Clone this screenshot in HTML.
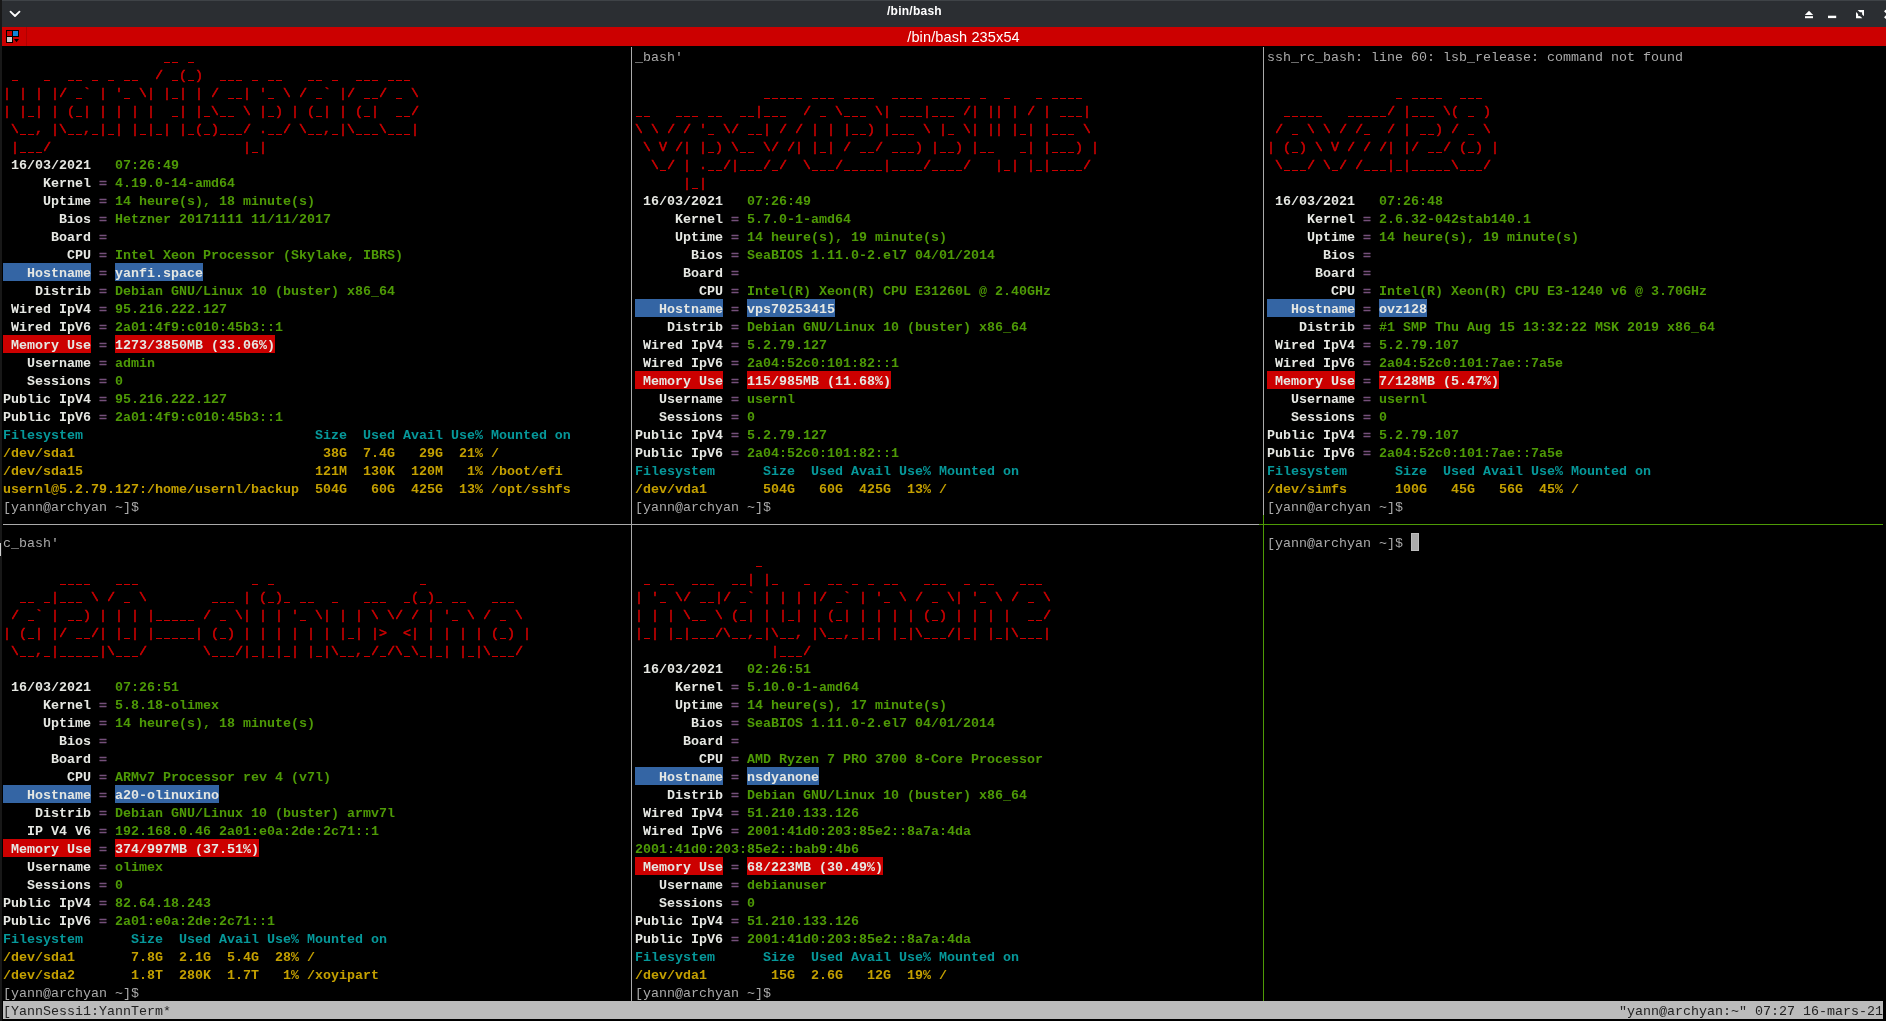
<!DOCTYPE html>
<html><head><meta charset="utf-8"><title>/bin/bash</title>
<style>
html,body{margin:0;padding:0;background:#000;}
body{width:1886px;height:1021px;position:relative;overflow:hidden;font-family:"Liberation Mono",monospace;}
#tb{position:absolute;left:0;top:0;width:1886px;height:27px;background:#2b2e32;}
#tb .hl{position:absolute;left:0;top:0;width:1886px;height:1px;background:#3f4347;}
#tb .t{position:absolute;left:0;top:3px;width:1829px;text-align:center;color:#fff;font:bold 12px/16px "Liberation Sans",sans-serif;letter-spacing:0.25px;will-change:transform;}
#rb{position:absolute;left:2px;top:27px;width:1884px;height:19px;background:#cc0000;}
#rb .t{position:absolute;left:0;top:0;width:1923px;text-align:center;color:#fff;font:14.5px/21px "Liberation Sans",sans-serif;letter-spacing:0.13px;will-change:transform;}
#rb .sep{position:absolute;left:24px;top:0;width:1px;height:19px;background:#b00000;}
#edge{position:absolute;left:0;top:0;width:2px;height:1021px;background:#181818;z-index:5;}
#term{position:absolute;left:0;top:0;width:1886px;height:1021px;will-change:transform;}
.s{position:absolute;height:18px;line-height:21px;font-size:13.333px;white-space:pre;}
.b{position:absolute;height:18px;}
.r{color:#cc0000;-webkit-text-stroke:0.55px #cc0000;}
.w{color:#e6e8e3;font-weight:bold;}
.g{color:#4e9a06;font-weight:bold;}
.m{color:#75507b;-webkit-text-stroke:0.4px #75507b;}
.c{color:#06989a;font-weight:bold;}
.y{color:#c4a000;font-weight:bold;}
.n{color:#aaaaaa;}
.st{color:#222;}
.ln{position:absolute;}
.gap{position:absolute;height:4px;box-shadow:-1px 0 0 #000,1px 0 0 #000;background:repeating-linear-gradient(90deg,#000 0,#000 0.6px,transparent 0.6px,transparent 7.3px,#000 7.3px,#000 8px);}
</style></head><body>
<div id="edge"></div><div style="position:absolute;left:0;top:543px;width:1px;height:13px;background:#d0d0d0;z-index:6"></div>
<div id="tb"><div class="hl"></div><div class="t">/bin/bash</div>
<svg style="position:absolute;left:0;top:0" width="1886" height="27" viewBox="0 0 1886 27">
<polyline points="10.5,11.7 15,16 19.5,11.7" fill="none" stroke="#fff" stroke-width="1.8" stroke-linecap="round" stroke-linejoin="round"/>
<polygon points="1809,10.8 1813.2,15 1804.8,15" fill="#fff"/>
<rect x="1805" y="16.2" width="8" height="2" fill="#fff"/>
<rect x="1828" y="15.7" width="8.2" height="2.4" fill="#fff"/>
<polygon points="1857.6,10 1864,10 1864,16.2" fill="#fff"/>
<polygon points="1856,12 1856,18.2 1862.3,18.2" fill="#fff"/>
<rect x="1858.2" y="12.3" width="3.9" height="3.8" fill="#2b2e32"/>
<path d="M1884.8,10.5 L1892.8,18 M1884.8,18 L1892.8,10.5" stroke="#fff" stroke-width="2.2" fill="none"/>
</svg>
</div>
<div id="rb"><div class="sep"></div><div class="t">/bin/bash 235x54</div>
<svg style="position:absolute;left:-2px;top:-27px" width="40" height="46" viewBox="0 0 40 46">
<rect x="6" y="30" width="13" height="7" fill="#000"/>
<rect x="6" y="30" width="7" height="13" fill="#000"/>
<rect x="7" y="31" width="5" height="5" fill="#cc0000"/>
<rect x="13" y="31" width="5" height="5" fill="#0f84d9"/>
<rect x="7" y="37" width="5" height="5" fill="#c8c8c8"/>
<polygon points="14,39 19,39 16.5,42.2" fill="#000"/>
</svg>
</div>
<div id="term">
<div class="b" style="left:3px;top:1001px;width:1880px;background:#bbbbbb"></div>
<div class="b" style="left:3px;top:263px;width:88px;background:#3465a4"></div>
<div class="b" style="left:115px;top:263px;width:88px;background:#3465a4"></div>
<div class="b" style="left:3px;top:335px;width:88px;background:#cc0000"></div>
<div class="b" style="left:115px;top:335px;width:160px;background:#cc0000"></div>
<div class="b" style="left:635px;top:299px;width:88px;background:#3465a4"></div>
<div class="b" style="left:747px;top:299px;width:88px;background:#3465a4"></div>
<div class="b" style="left:635px;top:371px;width:88px;background:#cc0000"></div>
<div class="b" style="left:747px;top:371px;width:144px;background:#cc0000"></div>
<div class="b" style="left:1267px;top:299px;width:88px;background:#3465a4"></div>
<div class="b" style="left:1379px;top:299px;width:48px;background:#3465a4"></div>
<div class="b" style="left:1267px;top:371px;width:88px;background:#cc0000"></div>
<div class="b" style="left:1379px;top:371px;width:120px;background:#cc0000"></div>
<div class="b" style="left:3px;top:785px;width:88px;background:#3465a4"></div>
<div class="b" style="left:115px;top:785px;width:104px;background:#3465a4"></div>
<div class="b" style="left:3px;top:839px;width:88px;background:#cc0000"></div>
<div class="b" style="left:115px;top:839px;width:144px;background:#cc0000"></div>
<div class="b" style="left:635px;top:767px;width:88px;background:#3465a4"></div>
<div class="b" style="left:747px;top:767px;width:72px;background:#3465a4"></div>
<div class="b" style="left:635px;top:857px;width:88px;background:#cc0000"></div>
<div class="b" style="left:747px;top:857px;width:136px;background:#cc0000"></div>
<span class="s r" style="left:163px;top:47px">__ _</span>
<span class="s r" style="left:11px;top:65px">_   _  __ _ _ __  / _(_)  ___ _ __   __ _  ___ ___</span>
<span class="s r" style="left:3px;top:83px">| | | |/ _` | '_ \| |_| | / __| '_ \ / _` |/ __/ _ \</span>
<span class="s r" style="left:3px;top:101px">| |_| | (_| | | | |  _| |_\__ \ |_) | (_| | (_|  __/</span>
<span class="s r" style="left:11px;top:119px">\__, |\__,_|_| |_|_| |_(_)___/ .__/ \__,_|\___\___|</span>
<span class="s r" style="left:11px;top:137px">|___/                        |_|</span>
<span class="s w" style="left:11px;top:155px">16/03/2021</span>
<span class="s g" style="left:115px;top:155px">07:26:49</span>
<span class="s w" style="left:43px;top:173px">Kernel</span>
<span class="s m" style="left:99px;top:173px">=</span>
<span class="s g" style="left:115px;top:173px">4.19.0-14-amd64</span>
<span class="s w" style="left:43px;top:191px">Uptime</span>
<span class="s m" style="left:99px;top:191px">=</span>
<span class="s g" style="left:115px;top:191px">14 heure(s), 18 minute(s)</span>
<span class="s w" style="left:59px;top:209px">Bios</span>
<span class="s m" style="left:99px;top:209px">=</span>
<span class="s g" style="left:115px;top:209px">Hetzner 20171111 11/11/2017</span>
<span class="s w" style="left:51px;top:227px">Board</span>
<span class="s m" style="left:99px;top:227px">=</span>
<span class="s w" style="left:67px;top:245px">CPU</span>
<span class="s m" style="left:99px;top:245px">=</span>
<span class="s g" style="left:115px;top:245px">Intel Xeon Processor (Skylake, IBRS)</span>
<span class="s w" style="left:3px;top:263px">   Hostname</span>
<span class="s m" style="left:99px;top:263px">=</span>
<span class="s w" style="left:115px;top:263px">yanfi.space</span>
<span class="s w" style="left:35px;top:281px">Distrib</span>
<span class="s m" style="left:99px;top:281px">=</span>
<span class="s g" style="left:115px;top:281px">Debian GNU/Linux 10 (buster) x86_64</span>
<span class="s w" style="left:11px;top:299px">Wired IpV4</span>
<span class="s m" style="left:99px;top:299px">=</span>
<span class="s g" style="left:115px;top:299px">95.216.222.127</span>
<span class="s w" style="left:11px;top:317px">Wired IpV6</span>
<span class="s m" style="left:99px;top:317px">=</span>
<span class="s g" style="left:115px;top:317px">2a01:4f9:c010:45b3::1</span>
<span class="s w" style="left:3px;top:335px"> Memory Use</span>
<span class="s m" style="left:99px;top:335px">=</span>
<span class="s w" style="left:115px;top:335px">1273/3850MB (33.06%)</span>
<span class="s w" style="left:27px;top:353px">Username</span>
<span class="s m" style="left:99px;top:353px">=</span>
<span class="s g" style="left:115px;top:353px">admin</span>
<span class="s w" style="left:27px;top:371px">Sessions</span>
<span class="s m" style="left:99px;top:371px">=</span>
<span class="s g" style="left:115px;top:371px">0</span>
<span class="s w" style="left:3px;top:389px">Public IpV4</span>
<span class="s m" style="left:99px;top:389px">=</span>
<span class="s g" style="left:115px;top:389px">95.216.222.127</span>
<span class="s w" style="left:3px;top:407px">Public IpV6</span>
<span class="s m" style="left:99px;top:407px">=</span>
<span class="s g" style="left:115px;top:407px">2a01:4f9:c010:45b3::1</span>
<span class="s c" style="left:3px;top:425px">Filesystem                             Size  Used Avail Use% Mounted on</span>
<span class="s y" style="left:3px;top:443px">/dev/sda1                               38G  7.4G   29G  21% /</span>
<span class="s y" style="left:3px;top:461px">/dev/sda15                             121M  130K  120M   1% /boot/efi</span>
<span class="s y" style="left:3px;top:479px">usernl@5.2.79.127:/home/usernl/backup  504G   60G  425G  13% /opt/sshfs</span>
<span class="s n" style="left:3px;top:497px">[yann@archyan ~]$</span>
<span class="s n" style="left:635px;top:47px">_bash'</span>
<span class="s r" style="left:763px;top:83px">_____ ___ ____  ____ _____ _  _   _ ____</span>
<span class="s r" style="left:635px;top:101px">__   ___ __  __|___  / _ \___ \| ___|___ /| || | / | ___|</span>
<span class="s r" style="left:635px;top:119px">\ \ / / '_ \/ __| / / | | |__) |___ \ |_ \| || |_| |___ \</span>
<span class="s r" style="left:643px;top:137px">\ V /| |_) \__ \/ /| |_| / __/ ___) |__) |__   _| |___) |</span>
<span class="s r" style="left:651px;top:155px">\_/ | .__/|___/_/  \___/_____|____/____/   |_| |_|____/</span>
<span class="s r" style="left:683px;top:173px">|_|</span>
<span class="s w" style="left:643px;top:191px">16/03/2021</span>
<span class="s g" style="left:747px;top:191px">07:26:49</span>
<span class="s w" style="left:675px;top:209px">Kernel</span>
<span class="s m" style="left:731px;top:209px">=</span>
<span class="s g" style="left:747px;top:209px">5.7.0-1-amd64</span>
<span class="s w" style="left:675px;top:227px">Uptime</span>
<span class="s m" style="left:731px;top:227px">=</span>
<span class="s g" style="left:747px;top:227px">14 heure(s), 19 minute(s)</span>
<span class="s w" style="left:691px;top:245px">Bios</span>
<span class="s m" style="left:731px;top:245px">=</span>
<span class="s g" style="left:747px;top:245px">SeaBIOS 1.11.0-2.el7 04/01/2014</span>
<span class="s w" style="left:683px;top:263px">Board</span>
<span class="s m" style="left:731px;top:263px">=</span>
<span class="s w" style="left:699px;top:281px">CPU</span>
<span class="s m" style="left:731px;top:281px">=</span>
<span class="s g" style="left:747px;top:281px">Intel(R) Xeon(R) CPU E31260L @ 2.40GHz</span>
<span class="s w" style="left:635px;top:299px">   Hostname</span>
<span class="s m" style="left:731px;top:299px">=</span>
<span class="s w" style="left:747px;top:299px">vps70253415</span>
<span class="s w" style="left:667px;top:317px">Distrib</span>
<span class="s m" style="left:731px;top:317px">=</span>
<span class="s g" style="left:747px;top:317px">Debian GNU/Linux 10 (buster) x86_64</span>
<span class="s w" style="left:643px;top:335px">Wired IpV4</span>
<span class="s m" style="left:731px;top:335px">=</span>
<span class="s g" style="left:747px;top:335px">5.2.79.127</span>
<span class="s w" style="left:643px;top:353px">Wired IpV6</span>
<span class="s m" style="left:731px;top:353px">=</span>
<span class="s g" style="left:747px;top:353px">2a04:52c0:101:82::1</span>
<span class="s w" style="left:635px;top:371px"> Memory Use</span>
<span class="s m" style="left:731px;top:371px">=</span>
<span class="s w" style="left:747px;top:371px">115/985MB (11.68%)</span>
<span class="s w" style="left:659px;top:389px">Username</span>
<span class="s m" style="left:731px;top:389px">=</span>
<span class="s g" style="left:747px;top:389px">usernl</span>
<span class="s w" style="left:659px;top:407px">Sessions</span>
<span class="s m" style="left:731px;top:407px">=</span>
<span class="s g" style="left:747px;top:407px">0</span>
<span class="s w" style="left:635px;top:425px">Public IpV4</span>
<span class="s m" style="left:731px;top:425px">=</span>
<span class="s g" style="left:747px;top:425px">5.2.79.127</span>
<span class="s w" style="left:635px;top:443px">Public IpV6</span>
<span class="s m" style="left:731px;top:443px">=</span>
<span class="s g" style="left:747px;top:443px">2a04:52c0:101:82::1</span>
<span class="s c" style="left:635px;top:461px">Filesystem      Size  Used Avail Use% Mounted on</span>
<span class="s y" style="left:635px;top:479px">/dev/vda1       504G   60G  425G  13% /</span>
<span class="s n" style="left:635px;top:497px">[yann@archyan ~]$</span>
<span class="s n" style="left:1267px;top:47px">ssh_rc_bash: line 60: lsb_release: command not found</span>
<span class="s r" style="left:1395px;top:83px">_ ____  ___</span>
<span class="s r" style="left:1283px;top:101px">_____   _____/ |___ \( _ )</span>
<span class="s r" style="left:1275px;top:119px">/ _ \ \ / /_  / | __) / _ \</span>
<span class="s r" style="left:1267px;top:137px">| (_) \ V / / /| |/ __/ (_) |</span>
<span class="s r" style="left:1275px;top:155px">\___/ \_/ /___|_|_____\___/</span>
<span class="s w" style="left:1275px;top:191px">16/03/2021</span>
<span class="s g" style="left:1379px;top:191px">07:26:48</span>
<span class="s w" style="left:1307px;top:209px">Kernel</span>
<span class="s m" style="left:1363px;top:209px">=</span>
<span class="s g" style="left:1379px;top:209px">2.6.32-042stab140.1</span>
<span class="s w" style="left:1307px;top:227px">Uptime</span>
<span class="s m" style="left:1363px;top:227px">=</span>
<span class="s g" style="left:1379px;top:227px">14 heure(s), 19 minute(s)</span>
<span class="s w" style="left:1323px;top:245px">Bios</span>
<span class="s m" style="left:1363px;top:245px">=</span>
<span class="s w" style="left:1315px;top:263px">Board</span>
<span class="s m" style="left:1363px;top:263px">=</span>
<span class="s w" style="left:1331px;top:281px">CPU</span>
<span class="s m" style="left:1363px;top:281px">=</span>
<span class="s g" style="left:1379px;top:281px">Intel(R) Xeon(R) CPU E3-1240 v6 @ 3.70GHz</span>
<span class="s w" style="left:1267px;top:299px">   Hostname</span>
<span class="s m" style="left:1363px;top:299px">=</span>
<span class="s w" style="left:1379px;top:299px">ovz128</span>
<span class="s w" style="left:1299px;top:317px">Distrib</span>
<span class="s m" style="left:1363px;top:317px">=</span>
<span class="s g" style="left:1379px;top:317px">#1 SMP Thu Aug 15 13:32:22 MSK 2019 x86_64</span>
<span class="s w" style="left:1275px;top:335px">Wired IpV4</span>
<span class="s m" style="left:1363px;top:335px">=</span>
<span class="s g" style="left:1379px;top:335px">5.2.79.107</span>
<span class="s w" style="left:1275px;top:353px">Wired IpV6</span>
<span class="s m" style="left:1363px;top:353px">=</span>
<span class="s g" style="left:1379px;top:353px">2a04:52c0:101:7ae::7a5e</span>
<span class="s w" style="left:1267px;top:371px"> Memory Use</span>
<span class="s m" style="left:1363px;top:371px">=</span>
<span class="s w" style="left:1379px;top:371px">7/128MB (5.47%)</span>
<span class="s w" style="left:1291px;top:389px">Username</span>
<span class="s m" style="left:1363px;top:389px">=</span>
<span class="s g" style="left:1379px;top:389px">usernl</span>
<span class="s w" style="left:1291px;top:407px">Sessions</span>
<span class="s m" style="left:1363px;top:407px">=</span>
<span class="s g" style="left:1379px;top:407px">0</span>
<span class="s w" style="left:1267px;top:425px">Public IpV4</span>
<span class="s m" style="left:1363px;top:425px">=</span>
<span class="s g" style="left:1379px;top:425px">5.2.79.107</span>
<span class="s w" style="left:1267px;top:443px">Public IpV6</span>
<span class="s m" style="left:1363px;top:443px">=</span>
<span class="s g" style="left:1379px;top:443px">2a04:52c0:101:7ae::7a5e</span>
<span class="s c" style="left:1267px;top:461px">Filesystem      Size  Used Avail Use% Mounted on</span>
<span class="s y" style="left:1267px;top:479px">/dev/simfs      100G   45G   56G  45% /</span>
<span class="s n" style="left:1267px;top:497px">[yann@archyan ~]$</span>
<span class="s n" style="left:3px;top:533px">c_bash'</span>
<span class="s r" style="left:59px;top:569px">____   ___              _ _                  _</span>
<span class="s r" style="left:19px;top:587px">__ _|___ \ / _ \        ___ | (_)_ __  _   ___  _(_)_ __   ___</span>
<span class="s r" style="left:11px;top:605px">/ _` | __) | | | |_____ / _ \| | | '_ \| | | \ \/ / | '_ \ / _ \</span>
<span class="s r" style="left:3px;top:623px">| (_| |/ __/| |_| |_____| (_) | | | | | | |_| |&gt;  &lt;| | | | | (_) |</span>
<span class="s r" style="left:11px;top:641px">\__,_|_____|\___/       \___/|_|_|_| |_|\__,_/_/\_\_|_| |_|\___/</span>
<span class="s w" style="left:11px;top:677px">16/03/2021</span>
<span class="s g" style="left:115px;top:677px">07:26:51</span>
<span class="s w" style="left:43px;top:695px">Kernel</span>
<span class="s m" style="left:99px;top:695px">=</span>
<span class="s g" style="left:115px;top:695px">5.8.18-olimex</span>
<span class="s w" style="left:43px;top:713px">Uptime</span>
<span class="s m" style="left:99px;top:713px">=</span>
<span class="s g" style="left:115px;top:713px">14 heure(s), 18 minute(s)</span>
<span class="s w" style="left:59px;top:731px">Bios</span>
<span class="s m" style="left:99px;top:731px">=</span>
<span class="s w" style="left:51px;top:749px">Board</span>
<span class="s m" style="left:99px;top:749px">=</span>
<span class="s w" style="left:67px;top:767px">CPU</span>
<span class="s m" style="left:99px;top:767px">=</span>
<span class="s g" style="left:115px;top:767px">ARMv7 Processor rev 4 (v7l)</span>
<span class="s w" style="left:3px;top:785px">   Hostname</span>
<span class="s m" style="left:99px;top:785px">=</span>
<span class="s w" style="left:115px;top:785px">a20-olinuxino</span>
<span class="s w" style="left:35px;top:803px">Distrib</span>
<span class="s m" style="left:99px;top:803px">=</span>
<span class="s g" style="left:115px;top:803px">Debian GNU/Linux 10 (buster) armv7l</span>
<span class="s w" style="left:27px;top:821px">IP V4 V6</span>
<span class="s m" style="left:99px;top:821px">=</span>
<span class="s g" style="left:115px;top:821px">192.168.0.46 2a01:e0a:2de:2c71::1</span>
<span class="s w" style="left:3px;top:839px"> Memory Use</span>
<span class="s m" style="left:99px;top:839px">=</span>
<span class="s w" style="left:115px;top:839px">374/997MB (37.51%)</span>
<span class="s w" style="left:27px;top:857px">Username</span>
<span class="s m" style="left:99px;top:857px">=</span>
<span class="s g" style="left:115px;top:857px">olimex</span>
<span class="s w" style="left:27px;top:875px">Sessions</span>
<span class="s m" style="left:99px;top:875px">=</span>
<span class="s g" style="left:115px;top:875px">0</span>
<span class="s w" style="left:3px;top:893px">Public IpV4</span>
<span class="s m" style="left:99px;top:893px">=</span>
<span class="s g" style="left:115px;top:893px">82.64.18.243</span>
<span class="s w" style="left:3px;top:911px">Public IpV6</span>
<span class="s m" style="left:99px;top:911px">=</span>
<span class="s g" style="left:115px;top:911px">2a01:e0a:2de:2c71::1</span>
<span class="s c" style="left:3px;top:929px">Filesystem      Size  Used Avail Use% Mounted on</span>
<span class="s y" style="left:3px;top:947px">/dev/sda1       7.8G  2.1G  5.4G  28% /</span>
<span class="s y" style="left:3px;top:965px">/dev/sda2       1.8T  280K  1.7T   1% /xoyipart</span>
<span class="s n" style="left:3px;top:983px">[yann@archyan ~]$</span>
<span class="s r" style="left:755px;top:551px">_</span>
<span class="s r" style="left:643px;top:569px">_ __  ___  __| |_   _  __ _ _ __   ___  _ __   ___</span>
<span class="s r" style="left:635px;top:587px">| '_ \/ __|/ _` | | | |/ _` | '_ \ / _ \| '_ \ / _ \</span>
<span class="s r" style="left:635px;top:605px">| | | \__ \ (_| | |_| | (_| | | | | (_) | | | |  __/</span>
<span class="s r" style="left:635px;top:623px">|_| |_|___/\__,_|\__, |\__,_|_| |_|\___/|_| |_|\___|</span>
<span class="s r" style="left:771px;top:641px">|___/</span>
<span class="s w" style="left:643px;top:659px">16/03/2021</span>
<span class="s g" style="left:747px;top:659px">02:26:51</span>
<span class="s w" style="left:675px;top:677px">Kernel</span>
<span class="s m" style="left:731px;top:677px">=</span>
<span class="s g" style="left:747px;top:677px">5.10.0-1-amd64</span>
<span class="s w" style="left:675px;top:695px">Uptime</span>
<span class="s m" style="left:731px;top:695px">=</span>
<span class="s g" style="left:747px;top:695px">14 heure(s), 17 minute(s)</span>
<span class="s w" style="left:691px;top:713px">Bios</span>
<span class="s m" style="left:731px;top:713px">=</span>
<span class="s g" style="left:747px;top:713px">SeaBIOS 1.11.0-2.el7 04/01/2014</span>
<span class="s w" style="left:683px;top:731px">Board</span>
<span class="s m" style="left:731px;top:731px">=</span>
<span class="s w" style="left:699px;top:749px">CPU</span>
<span class="s m" style="left:731px;top:749px">=</span>
<span class="s g" style="left:747px;top:749px">AMD Ryzen 7 PRO 3700 8-Core Processor</span>
<span class="s w" style="left:635px;top:767px">   Hostname</span>
<span class="s m" style="left:731px;top:767px">=</span>
<span class="s w" style="left:747px;top:767px">nsdyanone</span>
<span class="s w" style="left:667px;top:785px">Distrib</span>
<span class="s m" style="left:731px;top:785px">=</span>
<span class="s g" style="left:747px;top:785px">Debian GNU/Linux 10 (buster) x86_64</span>
<span class="s w" style="left:643px;top:803px">Wired IpV4</span>
<span class="s m" style="left:731px;top:803px">=</span>
<span class="s g" style="left:747px;top:803px">51.210.133.126</span>
<span class="s w" style="left:643px;top:821px">Wired IpV6</span>
<span class="s m" style="left:731px;top:821px">=</span>
<span class="s g" style="left:747px;top:821px">2001:41d0:203:85e2::8a7a:4da</span>
<span class="s g" style="left:635px;top:839px">2001:41d0:203:85e2::bab9:4b6</span>
<span class="s w" style="left:635px;top:857px"> Memory Use</span>
<span class="s m" style="left:731px;top:857px">=</span>
<span class="s w" style="left:747px;top:857px">68/223MB (30.49%)</span>
<span class="s w" style="left:659px;top:875px">Username</span>
<span class="s m" style="left:731px;top:875px">=</span>
<span class="s g" style="left:747px;top:875px">debianuser</span>
<span class="s w" style="left:659px;top:893px">Sessions</span>
<span class="s m" style="left:731px;top:893px">=</span>
<span class="s g" style="left:747px;top:893px">0</span>
<span class="s w" style="left:635px;top:911px">Public IpV4</span>
<span class="s m" style="left:731px;top:911px">=</span>
<span class="s g" style="left:747px;top:911px">51.210.133.126</span>
<span class="s w" style="left:635px;top:929px">Public IpV6</span>
<span class="s m" style="left:731px;top:929px">=</span>
<span class="s g" style="left:747px;top:929px">2001:41d0:203:85e2::8a7a:4da</span>
<span class="s c" style="left:635px;top:947px">Filesystem      Size  Used Avail Use% Mounted on</span>
<span class="s y" style="left:635px;top:965px">/dev/vda1        15G  2.6G   12G  19% /</span>
<span class="s n" style="left:635px;top:983px">[yann@archyan ~]$</span>
<span class="s n" style="left:1267px;top:533px">[yann@archyan ~]$</span>
<span class="s st" style="left:3px;top:1001px">[YannSessi1:YannTerm*</span>
<span class="s st" style="left:1619px;top:1001px">"yann@archyan:~" 07:27 16-mars-21</span>
<div class="gap" style="left:163px;top:60px;width:32px"></div>
<div class="gap" style="left:11px;top:78px;width:400px"></div>
<div class="gap" style="left:3px;top:96px;width:416px"></div>
<div class="gap" style="left:3px;top:114px;width:416px"></div>
<div class="gap" style="left:11px;top:132px;width:408px"></div>
<div class="gap" style="left:11px;top:150px;width:256px"></div>
<div class="gap" style="left:763px;top:96px;width:320px"></div>
<div class="gap" style="left:635px;top:114px;width:456px"></div>
<div class="gap" style="left:635px;top:132px;width:456px"></div>
<div class="gap" style="left:643px;top:150px;width:456px"></div>
<div class="gap" style="left:651px;top:168px;width:440px"></div>
<div class="gap" style="left:683px;top:186px;width:24px"></div>
<div class="gap" style="left:1395px;top:96px;width:88px"></div>
<div class="gap" style="left:1283px;top:114px;width:208px"></div>
<div class="gap" style="left:1275px;top:132px;width:216px"></div>
<div class="gap" style="left:1267px;top:150px;width:232px"></div>
<div class="gap" style="left:1275px;top:168px;width:216px"></div>
<div class="gap" style="left:59px;top:582px;width:368px"></div>
<div class="gap" style="left:19px;top:600px;width:496px"></div>
<div class="gap" style="left:11px;top:618px;width:512px"></div>
<div class="gap" style="left:3px;top:636px;width:528px"></div>
<div class="gap" style="left:11px;top:654px;width:512px"></div>
<div class="gap" style="left:755px;top:564px;width:8px"></div>
<div class="gap" style="left:643px;top:582px;width:400px"></div>
<div class="gap" style="left:635px;top:600px;width:416px"></div>
<div class="gap" style="left:635px;top:618px;width:416px"></div>
<div class="gap" style="left:635px;top:636px;width:416px"></div>
<div class="gap" style="left:771px;top:654px;width:40px"></div>
<div class="b" style="left:1411px;top:533px;width:6px;height:16px;background:#aaaaaa;border:1px solid #bdbdbd"></div>
<div class="ln" style="left:631px;top:47px;width:1px;height:954px;background:#aaaaaa"></div>
<div class="ln" style="left:1263px;top:47px;width:1px;height:468px;background:#aaaaaa"></div>
<div class="ln" style="left:1263px;top:515px;width:1px;height:486px;background:#4e9a06"></div>
<div class="ln" style="left:3px;top:524px;width:1256px;height:1px;background:#aaaaaa"></div>
<div class="ln" style="left:1259px;top:524px;width:624px;height:1px;background:#4e9a06"></div>
</div></body></html>
